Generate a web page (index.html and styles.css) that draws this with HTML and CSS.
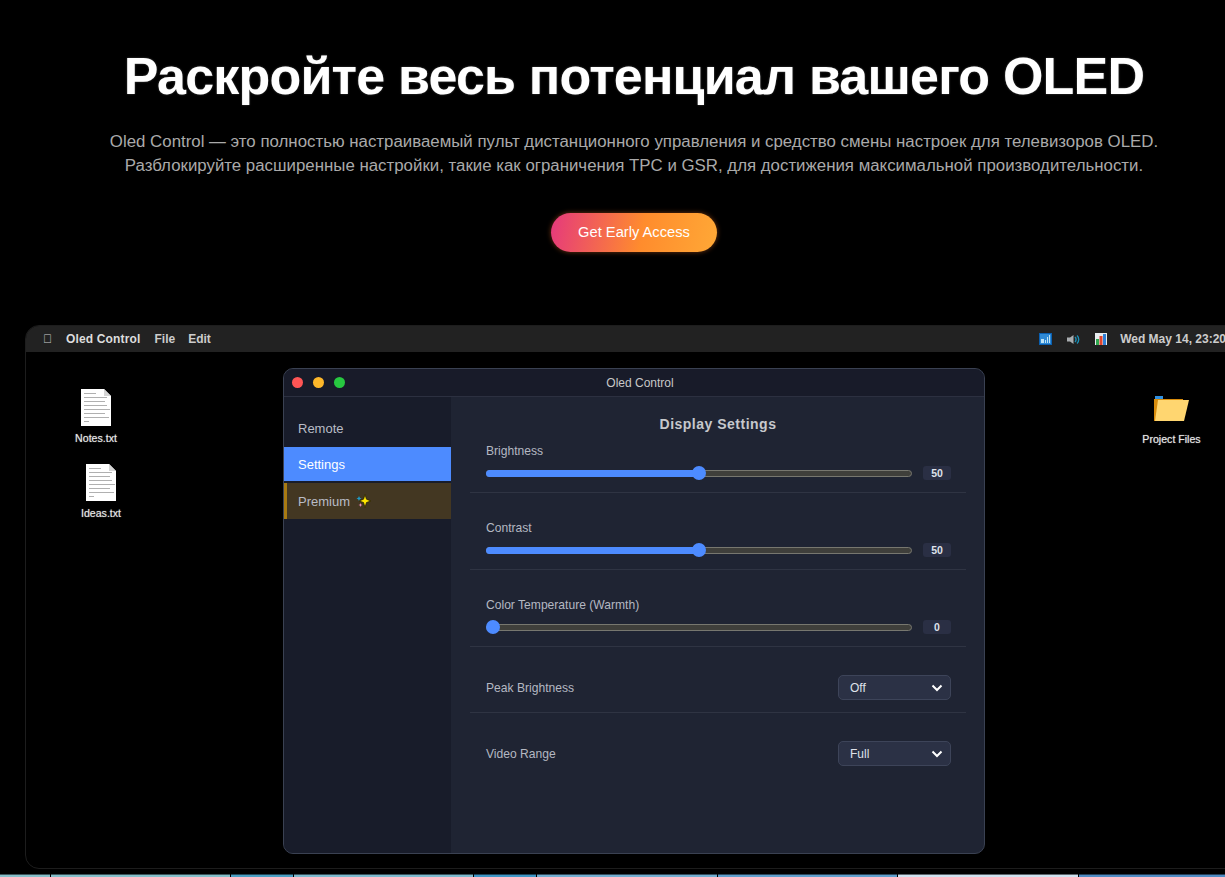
FILE: index.html
```html
<!DOCTYPE html>
<html lang="ru">
<head>
    <meta charset="UTF-8">
    <meta name="viewport" content="width=device-width, initial-scale=1.0">
    <title>Oled Control</title>
    <link rel="stylesheet" href="styles.css">
</head>
<body>
    <div class="page">
        <section class="hero">
            <h1>Раскройте весь потенциал вашего OLED</h1>
            <p>Oled Control — это полностью настраиваемый пульт дистанционного управления и средство смены настроек для телевизоров OLED.<br>Разблокируйте расширенные настройки, такие как ограничения TPC и GSR, для достижения максимальной производительности.</p>
            <a class="cta" href="#">Get Early Access</a>
        </section>

        <section class="desktop">
            <div class="menubar">
                <span class="apple">&#xF8FF;</span>
                <span class="app-name">Oled Control</span>
                <span class="menu-file">File</span>
                <span>Edit</span>
                <div class="status">
                    <svg class="tray" width="13" height="12" viewBox="0 0 13 12">
                        <rect width="13" height="12" fill="#0a5fb0"/>
                        <rect x="1" y="1" width="11" height="10" fill="#2f8ad6"/>
                        <path d="M2 10V6h3v4zM6 10V7h1v3zM8 10V4h1v6zM10 10V2h1v8z" fill="#bfe4f6"/>
                    </svg>
                    <svg class="tray" width="13" height="11" viewBox="0 0 13 11">
                        <path d="M0 3.500h3L6.500 1v9L3 7.500H0z" fill="#a9adb0"/>
                        <path d="M8 3a3.500 3.500 0 0 1 0 5M10 1.500a5.500 5.500 0 0 1 0 8" fill="none" stroke="#1b8fb5" stroke-width="1.400"/>
                    </svg>
                    <svg class="tray" width="12" height="12" viewBox="0 0 12 12">
                        <rect width="12" height="12" fill="#e8edf0"/>
                        <rect x="1" y="6" width="3" height="6" fill="#2fa84f"/>
                        <rect x="4.500" y="3" width="3" height="9" fill="#e2452f"/>
                        <rect x="8" y="1" width="3" height="11" fill="#2f7fd6"/>
                    </svg>
                    <span class="clock">Wed May 14, 23:20</span>
                </div>
            </div>

            <div class="desktop-icon icon-notes">
                <svg width="30" height="37" viewBox="0 0 30 37">
                    <path d="M0 0h23l7 7v30H0z" fill="#fff"/>
                    <path d="M23 0l7 7h-7z" fill="#d5d5d5"/>
                    <path d="M3 4.500h12M3 8.500h23M3 12.500h21M3 16.500h23M3 20.500h26M3 24.500h21M3 28.500h25M3 32.500h5" stroke="#b0b0b0" stroke-width="1.200"/>
                </svg>
                <span>Notes.txt</span>
            </div>
            <div class="desktop-icon icon-ideas">
                <svg width="30" height="37" viewBox="0 0 30 37">
                    <path d="M0 0h23l7 7v30H0z" fill="#fff"/>
                    <path d="M23 0l7 7h-7z" fill="#d5d5d5"/>
                    <path d="M3 4.500h12M3 8.500h23M3 12.500h21M3 16.500h23M3 20.500h26M3 24.500h21M3 28.500h25M3 32.500h5" stroke="#b0b0b0" stroke-width="1.200"/>
                </svg>
                <span>Ideas.txt</span>
            </div>
            <div class="desktop-icon icon-project">
                <svg width="35" height="25" viewBox="0 0 35 25">
                    <path d="M1 0h8v4H1z" fill="#2f8fe0"/>
                    <path d="M0 3h29v22H0z" fill="#d88c0c"/>
                    <path d="M4 4h31l-5 21H1z" fill="#ffd670"/>
                </svg>
                <span>Project Files</span>
            </div>

            <div class="window">
                <div class="titlebar">
                    <div class="lights">
                        <i class="light red"></i>
                        <i class="light yellow"></i>
                        <i class="light green"></i>
                    </div>
                    <span>Oled Control</span>
                </div>
                <div class="window-body">
                    <nav class="sidebar">
                        <a>Remote</a>
                        <a class="active">Settings</a>
                        <a class="premium">Premium
                            <svg width="15" height="14" viewBox="0 0 15 14">
                                <path d="M9 .5l1.500 4.700L15 7l-4.500 1.500L9 13.500 7.500 8.500 3 7l4.500-1.800z" fill="#ffe600" stroke="#2a2208" stroke-width=".8"/>
                                <path d="M3 2l.8 1.700L5.500 4.500l-1.700.8L3 7l-.8-1.700L.5 4.500l1.700-.8z" fill="#1e9cc8"/>
                                <path d="M4.500 9l.6 1.400 1.400.6-1.400.6L4.500 13l-.6-1.400-1.400-.6 1.400-.6z" fill="#e88ab8"/>
                            </svg>
                        </a>
                    </nav>
                    <main class="settings">
                        <h2>Display Settings</h2>

                        <div class="row">
                            <label>Brightness</label>
                            <div class="slider-line">
                                <div class="track">
                                    <div class="fill" style="width: 50%"></div>
                                    <div class="thumb" style="left: 206px"></div>
                                </div>
                                <output>50</output>
                            </div>
                        </div>

                        <div class="row">
                            <label>Contrast</label>
                            <div class="slider-line">
                                <div class="track">
                                    <div class="fill" style="width: 50%"></div>
                                    <div class="thumb" style="left: 206px"></div>
                                </div>
                                <output>50</output>
                            </div>
                        </div>

                        <div class="row">
                            <label>Color Temperature (Warmth)</label>
                            <div class="slider-line">
                                <div class="track">
                                    <div class="thumb" style="left: 0"></div>
                                </div>
                                <output>0</output>
                            </div>
                        </div>

                        <div class="row row-select">
                            <label>Peak Brightness</label>
                            <div class="select">Off
                                <svg width="12" height="8" viewBox="0 0 12 8"><path d="M1.500 1.500L6 6l4.500-4.500" fill="none" stroke="#fff" stroke-width="2"/></svg>
                            </div>
                        </div>

                        <div class="row row-select row-last">
                            <label>Video Range</label>
                            <div class="select">Full
                                <svg width="12" height="8" viewBox="0 0 12 8"><path d="M1.500 1.500L6 6l4.500-4.500" fill="none" stroke="#fff" stroke-width="2"/></svg>
                            </div>
                        </div>
                    </main>
                </div>
            </div>
        </section>
    </div>

    <div class="taskbar">
        <i style="width: 50px; background: #86bfc9"></i>
        <i style="width: 179px; background: #84bfca"></i>
        <i style="width: 62px; background: #4ba0c4"></i>
        <i style="width: 179px; background: #7dbace"></i>
        <i style="width: 62px; background: #3f97c6"></i>
        <i style="width: 180px; background: #72aed0"></i>
        <i style="width: 179px; background: #5f9fcc"></i>
        <i style="width: 180px; background: #cfe2f0"></i>
        <i style="width: 146px; background: #4f8cc4"></i>
    </div>
</body>
</html>
```

FILE: styles.css
```css
html, body {
    height: 100%;
}
body {
    margin: 0;
    background: #000;
    font-family: "Liberation Sans", Arial, sans-serif;
    overflow: hidden;
    color: #fff;
}
.page {
    width: 1218px;
    margin-left: 25px;
}
.hero {
    display: flex;
    flex-direction: column;
    align-items: center;
    text-align: center;
    padding-top: 44px;
    height: 325px;
    box-sizing: border-box;
}
.hero h1 {
    margin: 0;
    font-size: 52px;
    line-height: 64px;
    font-weight: bold;
    letter-spacing: -0.8px;
    white-space: nowrap;
    text-shadow: 0 0 2px rgba(255, 255, 255, 0.3);
}
.hero p {
    margin: 22px -30px 0;
    font-size: 16.850px;
    line-height: 24px;
    color: #aaa;
    white-space: nowrap;
}
.cta {
    margin-top: 35px;
    width: 166px;
    height: 39px;
    line-height: 39px;
    border-radius: 20px;
    background: linear-gradient(100deg, #e5397c 0%, #ff8c2d 55%, #ffa836 100%);
    box-shadow: 0 0 5px rgba(255, 120, 40, 0.45);
    color: #fff;
    font-size: 14.700px;
    text-decoration: none;
}
.desktop {
    position: relative;
    box-sizing: border-box;
    height: 544px;
    border: 1px solid #1d1d1d;
    border-radius: 14px;
    overflow: hidden;
}
.menubar {
    display: flex;
    align-items: center;
    height: 26px;
    padding-left: 17px;
    background: #222;
    font-size: 12px;
    font-weight: bold;
    color: #ccc;
}
.menubar span {
    margin-right: 15px;
}
.menubar .apple {
    width: 8px;
    margin-right: 15px;
    font-weight: normal;
}
.menubar .app-name {
    margin-right: 14px;
    letter-spacing: 0.15px;
    color: #ddd;
}
.menubar .menu-file {
    margin-right: 13px;
}
.status {
    display: flex;
    align-items: center;
    margin-left: auto;
}
.tray {
    margin-right: 15px;
}
.menubar .clock {
    margin-left: -2px;
    margin-right: 16px;
}
.desktop-icon {
    position: absolute;
    display: flex;
    flex-direction: column;
    align-items: center;
    width: 70px;
    font-size: 10.600px;
    color: #e6e6e6;
    text-shadow: 0 0 1px rgba(255, 255, 255, 0.6);
}
.desktop-icon span {
    margin-top: 6px;
}
.icon-notes {
    left: 35px;
    top: 63px;
}
.icon-ideas {
    left: 40px;
    top: 138px;
}
.icon-project {
    left: 1110px;
    top: 70px;
    width: 71px;
}
.icon-project span {
    margin-top: 12px;
}
.window {
    position: relative;
    width: 702px;
    height: 486px;
    margin: 16px 0 0 257px;
    box-sizing: border-box;
    border: 1px solid #3a4152;
    border-radius: 10px;
    background: #1f2433;
    overflow: hidden;
}
.titlebar {
    position: relative;
    display: flex;
    align-items: center;
    justify-content: center;
    height: 27px;
    padding-left: 12px;
    background: #181b29;
    border-bottom: 1px solid #2c3040;
    font-size: 12px;
    color: #c8c8c8;
}
.lights {
    position: absolute;
    left: 8px;
    display: flex;
    gap: 10px;
}
.light {
    width: 11px;
    height: 11px;
    border-radius: 50%;
}
.red {
    background: #ff5555;
}
.yellow {
    background: #fdb72a;
}
.green {
    background: #27c840;
}
.window-body {
    display: flex;
    height: 457px;
}
.sidebar {
    display: flex;
    flex-direction: column;
    gap: 1px;
    width: 167px;
    flex-shrink: 0;
    padding-top: 14px;
    background: #181c2a;
    font-size: 13px;
    color: #b9bcc6;
}
.sidebar a {
    display: flex;
    align-items: center;
    gap: 6px;
    height: 35px;
    padding-left: 14px;
}
.sidebar .active {
    background: #4d8bff;
    color: #fff;
    margin-bottom: 1px;
    height: 34px;
}
.sidebar .premium {
    height: 36px;
    background: #433722;
    border-left: 3px solid #a87a12;
    padding-left: 11px;
}
.settings {
    flex: 1;
    padding: 0 18px 0 19px;
}
.settings h2 {
    margin: 0;
    height: 47px;
    padding-top: 19px;
    box-sizing: border-box;
    text-align: center;
    font-size: 14px;
    line-height: 16px;
    letter-spacing: 0.5px;
    color: #c6c8cc;
}
.row {
    padding: 0 15px 12px 16px;
    margin-bottom: 28px;
    border-bottom: 1px solid #2f3443;
}
.row label {
    display: block;
    font-size: 12.100px;
    line-height: 14px;
    margin-bottom: 8px;
    color: #b4b8c2;
}
.slider-line {
    display: flex;
    align-items: center;
    gap: 11px;
}
.track {
    position: relative;
    flex: 1;
    height: 7px;
    box-sizing: border-box;
    border: 1px solid #77776f;
    border-radius: 4px;
    background: #3f3f3b;
}
.fill {
    position: absolute;
    left: -1px;
    top: -1px;
    bottom: -1px;
    background: #4d8bff;
    border-radius: 4px 0 0 4px;
}
.thumb {
    position: absolute;
    top: -5px;
    width: 14px;
    height: 14px;
    margin-left: -1px;
    border-radius: 50%;
    background: #4d8bff;
}
.slider-line output {
    width: 28px;
    height: 14px;
    line-height: 14px;
    border-radius: 3px;
    background: #2a2f44;
    text-align: center;
    font-size: 10.500px;
    font-weight: bold;
    color: #dfe2ea;
}
.row-select {
    display: flex;
    align-items: center;
    justify-content: space-between;
}
.row-select label {
    margin-bottom: 0;
}
.row-last {
    border-bottom: none;
}
.select {
    display: flex;
    align-items: center;
    justify-content: space-between;
    width: 113px;
    height: 25px;
    box-sizing: border-box;
    padding: 0 7px 0 11px;
    border: 1px solid #3d4459;
    border-radius: 5px;
    background: #2b3145;
    font-size: 12px;
    color: #dfe2ea;
}
.taskbar {
    position: absolute;
    left: 0;
    right: 0;
    bottom: 0;
    display: flex;
    height: 3px;
}
.taskbar i {
    display: block;
    flex-shrink: 0;
    margin-right: 1px;
    border-top: 1px solid rgba(0, 0, 0, 0.55);
    background-clip: padding-box;
}
```
